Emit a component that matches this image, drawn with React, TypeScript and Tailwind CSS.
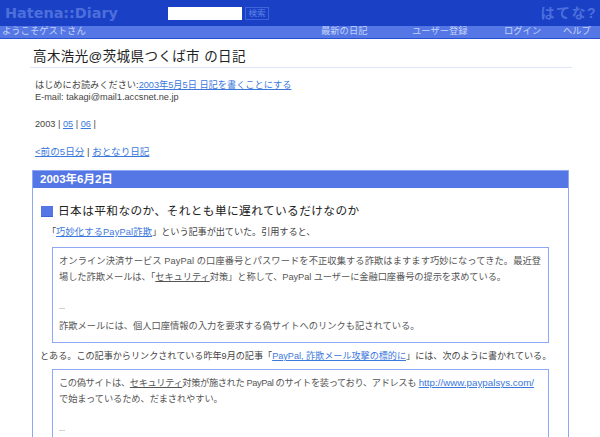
import React from "react";

const FONT = "font-['Liberation_Sans','Noto_Sans_CJK_JP',sans-serif]";
const linkClass = "text-[#3a78dc] underline";

const Keyword = ({ children }: { children: React.ReactNode }) => (
  <span className="underline decoration-[#555]">{children}</span>
);

const App = () => {
  return (
    <div className={`h-[437px] w-[600px] overflow-hidden bg-white ${FONT}`}>
      {/* header */}
      <div className="flex h-[26px] items-center justify-between bg-[#1a40c6] pl-[5px] pr-[3px]">
        <div className="flex items-center">
          <span className="w-[163px] font-['DejaVu_Sans',sans-serif] text-[14.4px] font-bold leading-[26px] text-[#4d6fdc]">
            Hatena::Diary
          </span>
          <input className="h-[13px] w-[74px] bg-white" />
          <span className="ml-[3px] flex h-[13px] w-[24px] items-center justify-center border border-[#3f63d8] text-[8.5px] leading-none text-[#5f82e6]">
            検索
          </span>
        </div>
        <span className="text-[14px] font-bold tracking-[1.5px] text-[#4d6fdc]">はてな?</span>
      </div>
      <div className="flex h-[13px] items-center border-b border-[#2b50cf] bg-[#5577e6] pl-[2px] text-[9.3px] leading-none text-[#c4d2f8]">
        <span className="w-[319px]">ようこそゲストさん</span>
        <span className="w-[91px]">最新の日記</span>
        <span className="w-[92px]">ユーザー登録</span>
        <span className="w-[59px]">ログイン</span>
        <span>ヘルプ</span>
      </div>

      <div className="pl-[32px] pr-[32px]">
        {/* title */}
        <h1 className="-ml-[2px] mr-[-4px] h-[29px] border-b border-[#dfe4fb] pl-[3px] pt-[8px] text-[13.5px] leading-[20px] tracking-[0.4px] text-[#222]">
          高木浩光@茨城県つくば市 の日記
        </h1>

        <div className="mt-[11px] pl-[3px] text-[9.2px] leading-[12px] text-[#444]">
          <p>
            はじめにお読みください:<a className={linkClass}>2003年5月5日 日記を書くことにする</a>
          </p>
          <p>E-mail: takagi@mail1.accsnet.ne.jp</p>
        </div>

        <p className="mt-[15px] pl-[3px] text-[9.2px] leading-[12px] text-[#444]">
          2003 | <a className={linkClass}>05</a> | <a className={linkClass}>06</a> |
        </p>

        <p className="mt-[16px] pl-[3px] text-[9.6px] leading-[12px] text-[#444]">
          <a className={linkClass}>&lt;前の5日分</a> | <a className={linkClass}>おとなり日記</a>
        </p>

        {/* day section */}
        <section className="mt-[12px] w-[537px] border border-[#8fa8f5] pb-[40px]">
          <h2 className="flex h-[17px] items-center bg-[#5577e6] pl-[7px] text-[11.5px] font-bold leading-none text-white">
            2003年6月2日
          </h2>

          <h3 className="mt-[15px] flex items-center pl-[8px] text-[11.7px] font-normal leading-[16px] tracking-[0.4px] text-[#222]">
            <span className="mr-[5px] h-[11px] w-[12px] border-b border-[#3f63d8] bg-[#5577e6]" />
            日本は平和なのか、それとも単に遅れているだけなのか
          </h3>

          <p className="mt-[5px] pl-[14px] text-[9.2px] leading-[16px] tracking-[-0.1px] text-[#444]">
            「<a className={`tracking-[0.2px] ${linkClass}`}>巧妙化するPayPal詐欺</a>」という記事が出ていた。引用すると、
          </p>

          <blockquote className="ml-[19px] mt-[7px] h-[96px] w-[497px] border border-[#8fa8f5] pl-[6px] pt-[5px] text-[9.25px] leading-[16px] text-[#555]">
            <p className="whitespace-nowrap tracking-[0.08px]">オンライン決済サービス PayPal の口座番号とパスワードを不正収集する詐欺はますます巧妙になってきた。最近登</p>
            <p className="whitespace-nowrap tracking-[-0.08px]">
              場した詐欺メールは、「<Keyword>セキュリティ</Keyword>対策」と称して、PayPal ユーザーに金融口座番号の提示を求めている。
            </p>
            <p className="mt-[14px] text-[7px]">...</p>
            <p className="mt-[3px] whitespace-nowrap">詐欺メールには、個人口座情報の入力を要求する偽サイトへのリンクも記されている。</p>
          </blockquote>

          <p className="mt-[5px] whitespace-nowrap pl-[7px] text-[9.1px] leading-[16px] text-[#444]">
            とある。この記事からリンクされている昨年9月の記事「<a className={linkClass}>PayPal, 詐欺メール攻撃の標的に</a>」には、次のように書かれている。
          </p>

          <blockquote className="ml-[19px] mt-[5px] h-[96px] w-[497px] border border-[#8fa8f5] pl-[6px] pt-[5px] text-[9.25px] leading-[16px] text-[#555]">
            <p className="whitespace-nowrap">
              <span className="tracking-[-0.4px]">
                この偽サイトは、<Keyword>セキュリティ</Keyword>対策が施された PayPal のサイトを装っており、アドレスも
              </span>{" "}
              <a className={`text-[9.8px] ${linkClass}`}>http://www.paypalsys.com/</a>
            </p>
            <p className="tracking-[-0.1px]">で始まっているため、だまされやすい。</p>
            <p className="mt-[14px] text-[7px]">...</p>
          </blockquote>
        </section>
      </div>
    </div>
  );
};

export default App;
